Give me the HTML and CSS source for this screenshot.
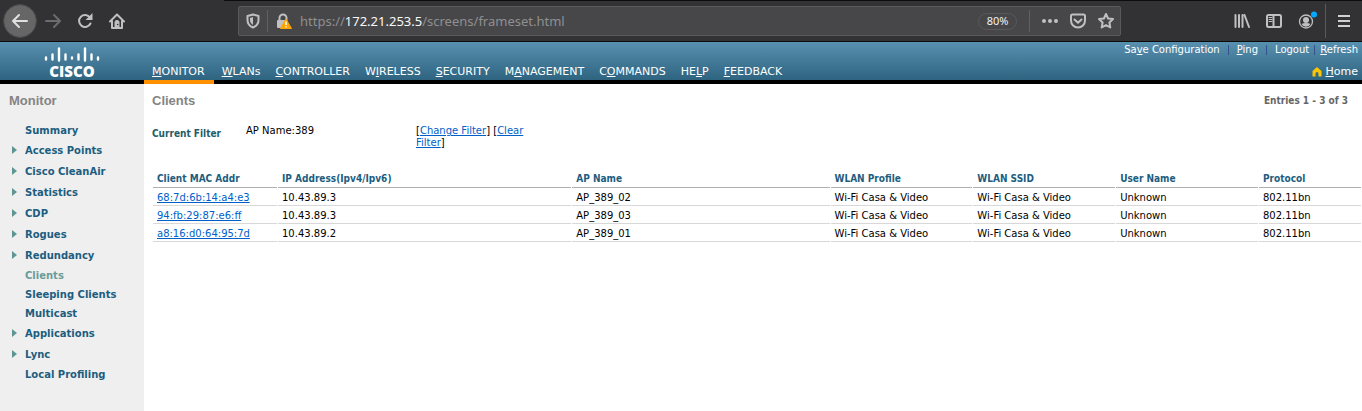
FILE: index.html
```html
<!DOCTYPE html>
<html lang="en">
<head>
<meta charset="utf-8">
<title>Clients</title>
<link rel="stylesheet" href="styles.css">
</head>
<body>
<div class="toolbar">
  <div class="tools">
    <button class="back" aria-label="Back"><svg width="32" height="32" viewBox="0 0 32 32"><path class="line" d="M23 16H9M15 10l-6 6 6 6"/></svg></button>
    <button class="dim" aria-label="Forward"><svg width="16" height="16" viewBox="0 0 16 16"><path class="line" d="M1 8h14M9 2l6 6-6 6"/></svg></button>
    <button aria-label="Reload"><svg width="16" height="16" viewBox="0 0 16 16"><path class="line" d="M13 4.500A6 6 0 1 0 13.500 10.500"/><path class="fill" d="M15.500 0v7H8.500z"/></svg></button>
    <button aria-label="Home page"><svg width="16" height="16" viewBox="0 0 16 16"><path class="line" d="M1 8.500L8 1.500l7 7M3 8v7h10V8"/><path class="fill" d="M5.500 9.500a2.500 2.500 0 0 1 5 0V15h-5z"/><circle cx="8.700" cy="11.500" r=".8" fill="#323234"/></svg></button>
  </div>
  <div class="urlbar">
    <button aria-label="Tracking protection"><svg width="14" height="16" viewBox="0 0 14 16"><path class="line" d="M7 1.500l5.500 1.500v4c0 4-2 6-5.500 7.500C3.500 13 1.500 11 1.500 7V3z"/><path class="fill" d="M7 4v8C4.800 10.500 4 9 4 7V5z"/></svg></button>
    <span class="divider"></span>
    <button class="lock" aria-label="Connection not secure"><svg width="16" height="16" viewBox="0 0 16 16"><path class="line" d="M3.500 8V5a3.500 3.500 0 0 1 7 0v2"/><rect class="fill" x="1" y="7" width="9" height="8" rx="1"/><path d="M10 6l5.500 9.500H4.500z" fill="#ffa400" stroke="#ffa400" stroke-linejoin="round"/><path d="M10 8.500v3.500M10 13.200v1.300" stroke="#fff" stroke-width="1.500"/></svg></button>
    <div class="address">https://<b>172.21.253.5</b>/screens/frameset.html</div>
    <button class="zoom">80%</button>
    <span class="divider"></span>
    <button aria-label="Page actions"><svg width="16" height="16" viewBox="0 0 16 16"><circle class="fill" cx="2" cy="8" r="2"/><circle class="fill" cx="8" cy="8" r="2"/><circle class="fill" cx="14" cy="8" r="2"/></svg></button>
    <button aria-label="Save to Pocket"><svg width="16" height="16" viewBox="0 0 16 16"><path class="line" d="M1 3q0-1.500 1.500-1.500h11Q15 1.500 15 3v4.500a7 7 0 0 1-14 0zM4.500 6.500L8 9.800l3.500-3.300"/></svg></button>
    <button aria-label="Bookmark"><svg width="16" height="16" viewBox="0 0 16 16"><path class="line" d="M8 1l2.100 4.500 4.900.6-3.600 3.400.9 5L8 12.100l-4.300 2.400.9-5L1 6.100l4.900-.6z"/></svg></button>
  </div>
  <div class="extras">
    <button aria-label="Library"><svg width="16" height="16" viewBox="0 0 16 16"><path class="line" d="M1.500 2v12M5 2v12M8.500 2v12M10.500 2l4.500 12"/></svg></button>
    <button aria-label="Sidebars"><svg width="16" height="16" viewBox="0 0 16 16"><rect class="line" x="1" y="2" width="14" height="12" rx="1.500"/><path class="line" d="M7.500 2v12"/><path class="thin" d="M3 4.500h3M3 6.500h3M3 8.500h3"/></svg></button>
    <button aria-label="Account"><svg width="20" height="20" viewBox="0 0 20 20"><circle cx="8" cy="10.500" r="6.500" fill="none" stroke="currentColor" stroke-width="1.300"/><circle class="fill" cx="8" cy="9" r="3"/><path class="fill" d="M3.500 13q1.500-1 4.500-1t4.500 1q-1.500 2.800-4.500 2.800T3.500 13z"/><circle cx="16" cy="3.500" r="3" fill="#00a8ff"/></svg></button>
    <button class="menu" aria-label="Menu"><svg width="12" height="16" viewBox="0 0 12 16"><path class="bars" d="M0 3h12M0 8h12M0 13h12"/></svg></button>
  </div>
</div>

<header class="header">
  <svg class="logo" width="56" height="38" viewBox="0 0 56 38" role="img" aria-label="Cisco">
    <path d="M2 11.500v2M8.500 8.500v5M15 2.500v12M21.500 8.500v5M28 11.500v1M34.500 8.500v5M41 2.500v12M47.500 8.500v5M54 11.500v2" stroke="#fff" stroke-width="2.400" stroke-linecap="round"/>
    <text x="28" y="31" text-anchor="middle" class="logo-text">CISCO</text>
  </svg>
  <nav class="nav">
    <a class="active" href="#"><u>M</u>ONITOR</a>
    <a href="#"><u>W</u>LANs</a>
    <a href="#"><u>C</u>ONTROLLER</a>
    <a href="#">W<u>I</u>RELESS</a>
    <a href="#"><u>S</u>ECURITY</a>
    <a href="#">M<u>A</u>NAGEMENT</a>
    <a href="#">C<u>O</u>MMANDS</a>
    <a href="#">HE<u>L</u>P</a>
    <a href="#"><u>F</u>EEDBACK</a>
  </nav>
  <div class="account">
    <div class="links">
      <a href="#">Sa<u>v</u>e Configuration</a><i></i><a href="#"><u>P</u>ing</a><i></i><a href="#">Logout</a><i class="tight"></i><a href="#"><u>R</u>efresh</a>
    </div>
    <a class="home" href="#"><svg width="10" height="10" viewBox="0 0 10 10"><path d="M5 0L9.500 4v5.500H6.500V6.500a1.500 1.500 0 0 0-3 0v3H.5V4z" fill="#fdc500"/></svg><span><u>H</u>ome</span></a>
  </div>
</header>

<div class="page">
  <aside class="sidebar">
    <h2>Monitor</h2>
    <ul>
      <li><a href="#">Summary</a></li>
      <li class="parent"><a href="#">Access Points</a></li>
      <li class="parent"><a href="#">Cisco CleanAir</a></li>
      <li class="parent"><a href="#">Statistics</a></li>
      <li class="parent"><a href="#">CDP</a></li>
      <li class="parent"><a href="#">Rogues</a></li>
      <li class="parent"><a href="#">Redundancy</a></li>
      <li class="current"><a href="#">Clients</a></li>
      <li><a href="#">Sleeping Clients</a></li>
      <li><a href="#">Multicast</a></li>
      <li class="parent"><a href="#">Applications</a></li>
      <li class="parent"><a href="#">Lync</a></li>
      <li><a href="#">Local Profiling</a></li>
    </ul>
  </aside>
  <main class="content">
    <div class="title"><h1>Clients</h1><span>Entries 1 - 3 of 3</span></div>
    <div class="filter">
      <strong>Current Filter</strong>
      <span class="value">AP Name:389</span>
      <span class="actions">[<a href="#">Change Filter</a>] [<a href="#">Clear Filter</a>]</span>
    </div>
    <table class="clients">
      <colgroup><col class="mac"><col class="ip"><col class="ap"><col class="wlan"><col class="wlan"><col class="wlan"><col></colgroup>
      <thead><tr><th>Client MAC Addr</th><th>IP Address(Ipv4/Ipv6)</th><th>AP Name</th><th>WLAN Profile</th><th>WLAN SSID</th><th>User Name</th><th>Protocol</th></tr></thead>
      <tbody>
        <tr><td><a href="#">68:7d:6b:14:a4:e3</a></td><td>10.43.89.3</td><td>AP_389_02</td><td>Wi-Fi Casa &amp; Video</td><td>Wi-Fi Casa &amp; Video</td><td>Unknown</td><td>802.11bn</td></tr>
        <tr><td><a href="#">94:fb:29:87:e6:ff</a></td><td>10.43.89.3</td><td>AP_389_03</td><td>Wi-Fi Casa &amp; Video</td><td>Wi-Fi Casa &amp; Video</td><td>Unknown</td><td>802.11bn</td></tr>
        <tr><td><a href="#">a8:16:d0:64:95:7d</a></td><td>10.43.89.2</td><td>AP_389_01</td><td>Wi-Fi Casa &amp; Video</td><td>Wi-Fi Casa &amp; Video</td><td>Unknown</td><td>802.11bn</td></tr>
      </tbody>
    </table>
  </main>
</div>
</body>
</html>
```
FILE: styles.css
```css
* { box-sizing: border-box; }
body {
  margin: 0;
  min-height: 100vh;
  display: flex;
  flex-direction: column;
  background: #fff;
  color: #000;
  font: 10px/12px Verdana, "DejaVu Sans", sans-serif;
}
h1, h2, ul { margin: 0; padding: 0; }
button { border: 0; padding: 0; background: none; color: #c0c0c2; display: flex; align-items: center; justify-content: center; }
.line, .thin { fill: none; stroke: currentColor; stroke-width: 2; stroke-linejoin: round; stroke-linecap: round; }
.thin { stroke-width: 1; }
.bars { stroke: currentColor; stroke-width: 2; }
.fill { fill: currentColor; }

.toolbar {
  display: flex;
  align-items: center;
  height: 42px;
  padding: 1px 0 0 4px;
  background: linear-gradient(#0c0c0d, #0c0c0d) 224px 0 / 100% 1px no-repeat #323234;
  border-bottom: 1px solid #0c0c0d;
}
.tools { display: flex; align-items: center; gap: 16px; width: 234px; }
.tools .back { width: 32px; height: 32px; border-radius: 50%; background: #666667; outline: 1px solid #4a4a4b; color: #e0e0e1; margin-right: -7px; }
.tools .dim { color: #6c6c6e; }
.urlbar {
  flex: 1;
  display: flex;
  align-items: center;
  gap: 12px;
  height: 30px;
  padding: 0 6px;
  background: #474749;
  border: 1px solid #5a5a5c;
  border-radius: 2px;
}
.urlbar > button:first-child { width: 16px; margin-right: -6px; }
.divider { width: 1px; height: 22px; background: #606063; }
.urlbar .lock { margin: 0 -4px; }
.address { flex: 1; font: 13px/20px "Noto Sans", sans-serif; color: #8f8f91; white-space: nowrap; }
.address b { font-weight: 400; color: #f9f9fa; }
.zoom { width: 39px; height: 17px; border: 1px solid #59595b; border-radius: 9px; font: 11px/14px "Noto Sans", sans-serif; color: #f0f0f1; }
.extras { display: flex; align-items: center; width: 241px; padding-left: 113px; gap: 16px; }
.extras .menu { width: 41px; height: 34px; margin-left: -9px; border-left: 1px solid #5a5a5c; color: #d0d0d2; }

.header {
  display: flex;
  height: 42px;
  background: linear-gradient(#5890b0, #2e6480);
  border-bottom: 4px solid #000;
}
.header a { color: #fff; text-decoration: none; }
.logo { width: 144px; height: 38px; margin-top: 4px; fill: none; }
.logo-text { font: 900 15px "Open Sans", sans-serif; fill: #fff; }
.nav { display: flex; align-items: flex-end; flex: 1; gap: 1px; margin-bottom: -4px; font-size: 11px; }
.nav a { padding: 0 7px 2px; border-bottom: 4px solid transparent; line-height: 13px; }
.nav a.active { padding: 0 9px 2px 8px; border-bottom-color: #ff9000; }
.account { display: flex; flex-direction: column; justify-content: space-between; align-items: flex-end; padding: 2px 4px 2px 0; }
.links { display: flex; align-items: center; }
.links i { width: 1px; height: 10px; margin: 0 8px; background: #33528a; }
.links i.tight { margin: 0 5px; }
.home { display: flex; align-items: center; gap: 4px; font-size: 11px; line-height: 13px; }

.page { display: flex; flex: 1; }
.sidebar { width: 144px; background: #efefef; }
h1, h2 { font: bold 13px/16px "Liberation Sans", Arial, sans-serif; color: #848484; }
.sidebar h2 { padding: 9px 9px 12px; }
.sidebar ul { list-style: none; }
.sidebar li { display: flex; align-items: center; height: 19px; padding-left: 25px; font-weight: bold; }
.sidebar li a { color: #1c5d80; text-decoration: none; white-space: nowrap; }
.sidebar .current a { color: #6b9b9b; }
.sidebar .parent { height: 21px; padding-left: 12px; }
.parent::before { content: ""; margin: 0 8px 2px 0; border: solid transparent; border-width: 4px 0 4px 5px; border-left-color: #5f9695; }

.content { flex: 1; padding-top: 9px; }
.title { display: flex; justify-content: space-between; align-items: center; padding: 0 14px 0 8px; }
.title span, .filter strong, th { font-family: Tahoma, "DejaVu Sans Condensed", "DejaVu Sans", sans-serif; font-stretch: condensed; font-weight: bold; }
.title span { color: #666; }
.filter { display: flex; height: 43px; margin: 16px 8px 0; }
.filter strong { width: 94px; padding-top: 3px; color: #245c68; }
.filter .value { width: 170px; }
.filter .actions { width: 125px; }
.content a { color: #0060c8; }
.clients { width: 100%; table-layout: fixed; border-collapse: separate; border-spacing: 1px 0; padding-left: 8px; }
.mac { width: 124px; }
.ip { width: 24.4%; }
.ap { width: 21.4%; }
.wlan { width: 11.8%; }
th, td { height: 18px; padding: 2px 4px 0; text-align: left; white-space: nowrap; border-bottom: 1px solid #d8d8d8; }
th { color: #1c5d80; border-bottom-color: #b0b0b0; height: 20px; }
```
